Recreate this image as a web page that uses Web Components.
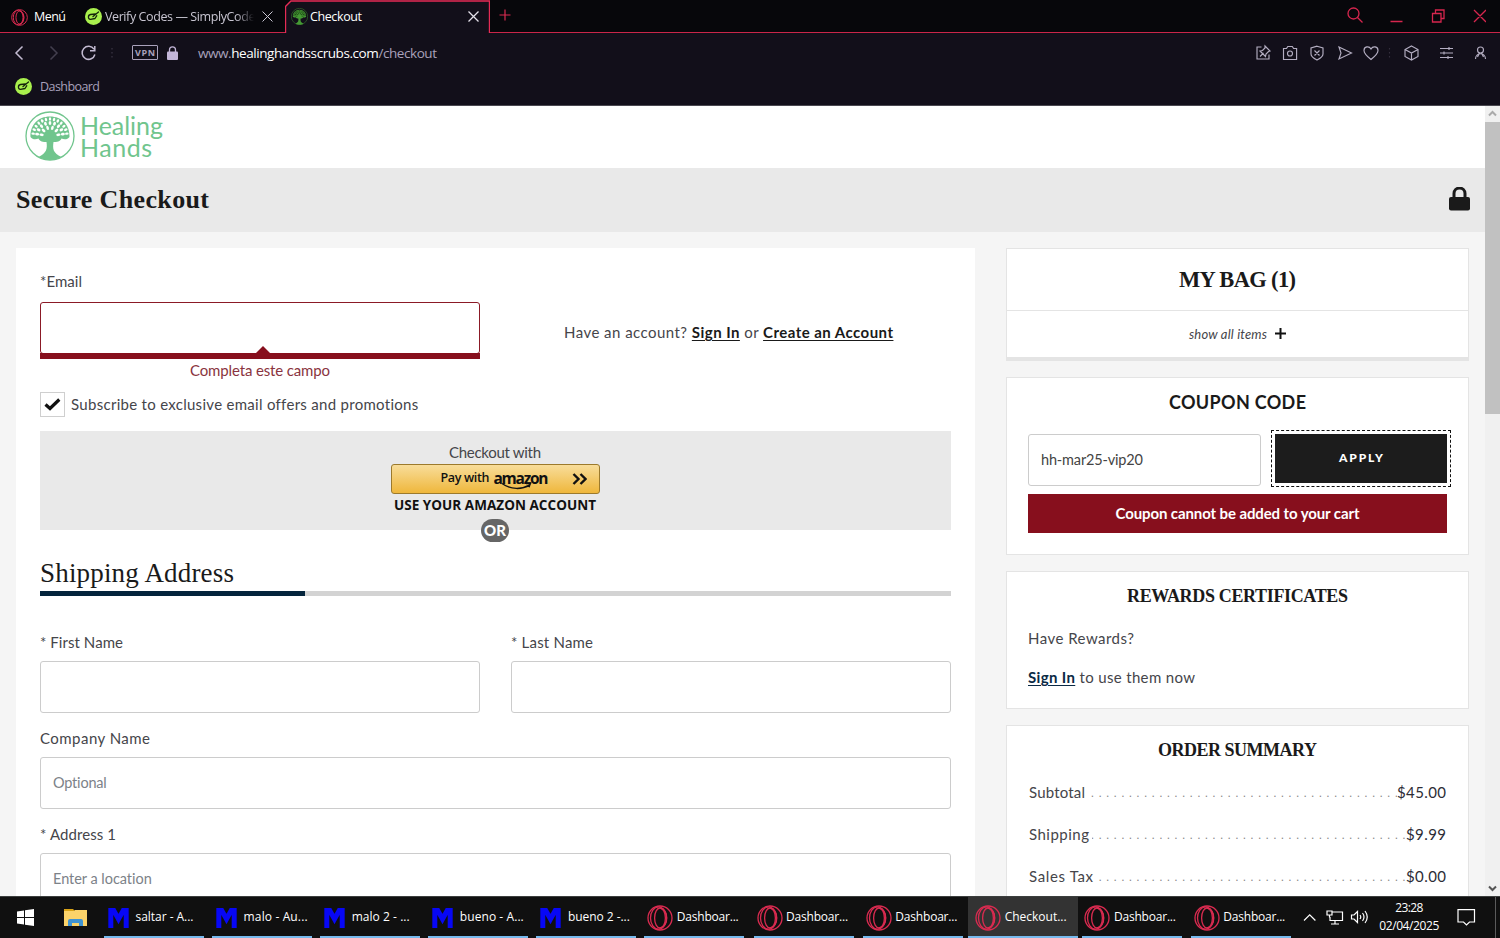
<!DOCTYPE html>
<html lang="es">
<head>
<meta charset="utf-8">
<title>Checkout</title>
<style>
  body {
    margin: 0;
    width: 1500px;
    height: 938px;
    overflow: hidden;
    display: flex;
    flex-direction: column;
    background: #f5f5f5;
    color: #45454a;
    font: 15px/20px Lato, "Open Sans", sans-serif;
  }
  .viewport { flex: 1; display: flex; min-height: 0; overflow: hidden; }
  .page { width: 1485px; overflow: hidden; }
  .columns { display: flex; justify-content: space-between; padding: 16px 16px 0; }
  .main { width: 911px; background: #fff; padding: 24px; height: 700px; }
  .side { width: 463px; display: flex; flex-direction: column; gap: 16px; }
  .account { display: flex; }
  .account form-field { width: 440px; }
  .signin { flex: 1; padding: 50px 0 0 84px; }
  .names { display: grid; grid-template-columns: 440px 440px; gap: 31px; }
  .fields { display: flex; flex-direction: column; gap: 16px; margin-top: 37px; }
  a { color: #1a1a1a; font-weight: bold; text-decoration: underline; text-underline-offset: 2px; }
  .rewards a { color: #0b2a45; }
  .subscribe { display: flex; align-items: center; gap: 6px; margin: 11px 0 14px; height: 25px; }
  .subscribe text-run { margin-top: -2px; }
  .box { width: 23px; height: 23px; border: 1px solid #cfcfcf; display: flex; align-items: center; justify-content: center; }
  .show { display: flex; justify-content: center; align-items: center; gap: 8px; height: 46px; font-size: 13px; font-style: italic; border-top: 1px solid #e4e4e4; }
  .show text-run { margin-top: -1px; }
  .show svg { margin-top: -2px; }
  .coupon { display: flex; justify-content: space-between; align-items: flex-start; margin: 17px 21px 0; }
  .coupon form-field { width: 233px; }
  .apply { box-sizing: border-box; width: 172px; height: 49px; padding-bottom: 2px; background: #1c1c1c; color: #fff; outline: 1px dashed #111; outline-offset: 3px; display: flex; align-items: center; justify-content: center; font-size: 12px; font-weight: 900; }
  .error { box-sizing: border-box; margin: 8px 21px 21px; height: 39px; padding-bottom: 2px; background: #870f1d; color: #fff; font-weight: bold; display: flex; align-items: center; justify-content: center; }
  .rewards { padding: 18px 21px 21px; }
  .rewards div + div { margin-top: 19px; }
</style>
</head>
<body>
<opera-tabs></opera-tabs>
<address-bar></address-bar>
<div class="viewport">
  <div class="page">
    <shop-header></shop-header>
    <title-bar><text-run w="193">Secure Checkout</text-run></title-bar>
    <div class="columns">
      <div class="main">
        <div class="account">
          <form-field invalid>
            <text-run slot="label" w="42">*Email</text-run>
            <text-run slot="message" w="140">Completa este campo</text-run>
          </form-field>
          <div class="signin"><text-run w="329">Have an account? <a>Sign In</a> or <a>Create an Account</a></text-run></div>
        </div>
        <div class="subscribe">
          <span class="box"><svg width="17" height="14" viewBox="0 0 17 14"><path d="M1.5 6.5 6 10.500 15.300 1.500" fill="none" stroke="#111" stroke-width="3.200"/></svg></span>
          <text-run w="347">Subscribe to exclusive email offers and promotions</text-run>
        </div>
        <amazon-box></amazon-box>
        <section-heading><text-run w="194">Shipping Address</text-run></section-heading>
        <div class="fields">
          <div class="names">
            <form-field><text-run slot="label" w="83">* First Name</text-run></form-field>
            <form-field><text-run slot="label" w="82">* Last Name</text-run></form-field>
          </div>
          <form-field><text-run slot="label" w="110">Company Name</text-run><text-run slot="value" w="54">Optional</text-run></form-field>
          <form-field><text-run slot="label" w="76">* Address 1</text-run><text-run slot="value" w="99">Enter a location</text-run></form-field>
        </div>
      </div>
      <div class="side">
        <side-card style="--title-size:22.5px;--title-height:61px;--foot:4px">
          <text-run slot="title" w="117">MY BAG (1)</text-run>
          <div class="show"><text-run w="78">show all items</text-run>
            <svg width="11" height="11" viewBox="0 0 11 11"><path d="M5.500 0v11M0 5.500h11" stroke="#111" stroke-width="2"/></svg></div>
        </side-card>
        <side-card style="--title-font:Lato,sans-serif;--title-size:18px;--title-height:39px;--title-pad:8px">
          <text-run slot="title" w="137">COUPON CODE</text-run>
          <div class="coupon">
            <form-field bare style="--value:#444"><text-run slot="value" w="102">hh-mar25-vip20</text-run></form-field>
            <div class="apply"><text-run w="44">APPLY</text-run></div>
          </div>
          <div class="error"><text-run w="244">Coupon cannot be added to your cart</text-run></div>
        </side-card>
        <side-card style="--title-size:18px;--title-height:38px;--title-pad:9px">
          <text-run slot="title" w="221">REWARDS CERTIFICATES</text-run>
          <div class="rewards">
            <div><text-run w="106">Have Rewards?</text-run></div>
            <div><text-run w="167"><a>Sign In</a> to use them now</text-run></div>
          </div>
        </side-card>
        <side-card style="--title-size:18px;--title-height:34px;--title-pad:13px">
          <text-run slot="title" w="159">ORDER SUMMARY</text-run>
          <summary-row><text-run w="56">Subtotal</text-run><text-run slot="price" w="49">$45.00</text-run></summary-row>
          <summary-row><text-run w="60">Shipping</text-run><text-run slot="price" w="40">$9.99</text-run></summary-row>
          <summary-row last><text-run w="64">Sales Tax</text-run><text-run slot="price" w="40">$0.00</text-run></summary-row>
        </side-card>
      </div>
    </div>
  </div>
  <page-scrollbar></page-scrollbar>
</div>
<win-taskbar></win-taskbar>

<script>
const UI_FONT = '"Open Sans", "Noto Sans", sans-serif';

const operaIcon = (size, sw = 1.2) => `<svg width="${size}" height="${size}" viewBox="0 0 26 26" fill="none" stroke="#d92b50" stroke-width="${sw}">
  <circle cx="13" cy="13" r="12"/><ellipse cx="13" cy="13" rx="5.4" ry="10"/><ellipse cx="11.5" cy="13" rx="8" ry="11.2"/><path d="M13 3c9 1 9 19 0 20"/></svg>`;

const codeIcon = (size) => `<svg width="${size}" height="${size}" viewBox="0 0 17 17"><circle cx="8.5" cy="8.5" r="8.5" fill="#a9f04d"/>
  <path d="M10.500 6 5.500 6.500c-3 .5-2.500 5 0 4.800l4.500-.8 1.800-2.800M8 8.500l5.500-4.500" fill="none" stroke="#16240c" stroke-width="1.300" stroke-linecap="round" stroke-linejoin="round"/></svg>`;

const leaves = () => {
  // three fans of leaf shapes cut out of the crown
  const rings = [[8.5, 6, 1.3, 2.2], [13, 9, 1.35, 2], [17, 13, 1.2, 1.8]];
  let out = "";
  for (const [r, n, rx, ry] of rings) {
    for (let i = 0; i < n; i++) {
      const a = -82 + (164 / (n - 1)) * i;
      out += `<ellipse cx="25" cy="${25 - r}" rx="${rx}" ry="${ry}" transform="rotate(${a} 25 25)"/>`;
    }
  }
  return out;
};

const treeIcon = (size, color, hole) => `<svg width="${size}" height="${size}" viewBox="0 0 50 50">
  <circle cx="25" cy="25" r="24" fill="none" stroke="${color}" stroke-width="1.3"/>
  <path d="M5.500 26C5 14 13 5.500 25 5.500S45 14 44.500 26c-2 3-6 2.500-8 1.500-1 3-5 3.500-8 3.500-1 7-.5 11 8 15-6 4-17 4-23 0 8-4 9-8 8-15-3 0-7-.5-8-3.500-2 1-6 1.500-8-1.500z" fill="${color}"/>
  <g fill="${hole}">${leaves()}</g></svg>`;

// Single line of text, tracked so that it fills the width given in "w".
class TextRun extends HTMLElement {
  constructor() {
    super();
    this.attachShadow({ mode: "open" }).innerHTML = `
      <style>:host { display: inline-block; white-space: nowrap; }</style><slot></slot>`;
  }
  connectedCallback() {
    const target = Number(this.getAttribute("w"));
    const count = this.textContent.length - 1;
    if (!target || count < 1) return;
    this.style.letterSpacing = "0px";
    const natural = this.getBoundingClientRect().width;
    const gap = (target - natural) / count;
    this.style.letterSpacing = gap.toFixed(3) + "px";
    this.style.marginRight = (-gap).toFixed(3) + "px";
  }
}

class OperaTabs extends HTMLElement {
  constructor() {
    super();
    this.attachShadow({ mode: "open" }).innerHTML = `
      <style>
        :host { display: flex; height: 33px; background: #07070b; color: #e8e6ee; font: 12.5px/18px ${UI_FONT}; }
        .cell { box-sizing: border-box; display: flex; align-items: center; height: 33px; border-bottom: 1px solid #c92549; }
        .menu { width: 84px; padding: 2px 0 0 11px; gap: 6px; color: #fff; }
        .tab { width: 201px; padding: 1px 12px 0 1px; gap: 3px; color: #c9c6d2; }
        .tab .name { width: 149px; margin-right: auto; overflow: hidden; -webkit-mask: linear-gradient(90deg, #000 88%, transparent); }
        .active { position: relative; width: 205px; background: #120f1a; border: 0; padding: 0 11px 0 6px; gap: 2px; color: #fff; }
        .active .name { flex: 1; padding-top: 1px; }
        .active .edge { position: absolute; inset: 0; }
        .rest { flex: 1; padding: 0 14px 2px 9px; }
        .tools { margin-left: auto; }
        svg { display: block; flex: none; }
      </style>
      <div class="cell menu">${operaIcon(17, 1.5)}<text-run w="32">Menú</text-run></div>
      <div class="cell tab">${codeIcon(17)}<span class="name"><text-run w="156">Verify Codes — SimplyCodes</text-run></span>
        <svg width="11" height="11" viewBox="0 0 11 11"><path d="m.5.5 10 10m0-10-10 10" stroke="#c9c6d2"/></svg></div>
      <div class="cell active">
        <svg class="edge" width="205" height="33" viewBox="0 0 205 33"><path d="M0 0h6L0 6z" fill="#07070b"/><path d="M0 32.500h.5V6.500l5.500-5.500h198.500v31.500h.5" fill="none" stroke="#e52b55" stroke-width="1.400"/></svg>
        ${treeIcon(17, "#459a34", "#173812")}<span class="name"><text-run w="52">Checkout</text-run></span>
        <svg width="11" height="11" viewBox="0 0 11 11"><path d="m.5.5 10 10m0-10-10 10" stroke="#e4e1ea" stroke-width="1.300"/></svg></div>
      <div class="cell rest">
        <svg width="12" height="12" viewBox="0 0 12 12"><path d="M6 .5v11M.5 6h11" stroke="#d92b50" stroke-width="1.200"/></svg>
        <svg class="tools" width="140" height="20" viewBox="0 -1 140 20" fill="none" stroke="#d6264e" stroke-width="1.300"><circle cx="7.500" cy="7.500" r="5.500"/><path d="m11.500 11.500 5 5M44.500 15.500h12M86.500 7.500H95V16h-8.500zM89.500 7.500V4H98v8.500h-3M128 4l12 12m0-12-12 12"/></svg>
      </div>`;
  }
}

class AddressBar extends HTMLElement {
  constructor() {
    super();
    this.attachShadow({ mode: "open" }).innerHTML = `
      <style>
        :host { display: block; box-sizing: border-box; height: 73px; background: #120f1a; border-bottom: 1px solid #4a4850; color: #a9a1bb; font: 13.5px/20px ${UI_FONT}; }
        .row { display: flex; align-items: center; height: 39px; justify-content: space-between; }
        .left { display: flex; align-items: center; }
        .vpn { width: 24px; height: 13px; border: 1px solid #a9a1bb; border-radius: 1px; font: bold 9px/13px ${UI_FONT}; text-align: center; margin: 0 9px 0 17px; }
        .url { margin-left: 20px; }
        b { font-weight: normal; color: #fff; }
        .marks { display: flex; align-items: center; gap: 8px; height: 29px; padding-left: 15px; font-size: 12.5px; }
      </style>
      <div class="row">
        <div class="left">
          <svg width="115" height="20" viewBox="0 0 115 20" fill="none" stroke="#c3bbd2" stroke-width="1.500">
            <path d="m22.500 3.500-6.500 6.500 6.500 6.500"/><path d="m50.500 3.500 6.500 6.500-6.500 6.500" stroke="#433f4e"/>
            <path d="M94 6.200a6.500 6.500 0 1 0 .9 5.300M94.800 3v4.800H90"/><path d="M112 5v12" stroke="#332f3d" stroke-dasharray="1.500 2.500"/></svg>
          <div class="vpn"><text-run w="20">VPN</text-run></div>
          <svg width="11" height="14" viewBox="0 0 11 14"><path d="M2.500 6V3.800a3 3 0 0 1 6 0V6" fill="none" stroke="#c3b6d8" stroke-width="1.300"/><rect y="5.500" width="11" height="8.500" rx="1" fill="#c3b6d8"/></svg>
          <span class="url"><text-run w="239">www.<b>healinghandsscrubs.com</b>/checkout</text-run></span>
        </div>
        <svg width="245" height="20" viewBox="1255 0 245 20" fill="none" stroke="#b4aec2" stroke-width="1.150">
          <path d="M1261.500 4h-4.500v12h12v-4.500M1265 3l5 5-1.500.5-2.500 2.500-.5 2.500-5.500-5.500 2.500-.5L1265 5zM1263.500 10l-3.500 3.500"/>
          <path d="M1283.500 5.500h3l1.300-2h4.500l1.300 2h3v11h-13.100z"/><circle cx="1290" cy="10.500" r="2.500"/>
          <path d="M1317 3.200l6 1.800v6c0 3-3 4.500-6 6-3-1.500-6-3-6-6V5zM1314.500 7.500l5 5m0-5-5 5"/>
          <path d="m1339 4 12.500 6-12.500 6 2-6z"/>
          <path d="M1371 16.500c-5-4-7-6.500-7-9 0-4 5-5 7-1.500 2-3.500 7-2.500 7 1.500 0 2.500-2 5-7 9z"/>
          <path d="M1389.500 5v12" stroke="#332f3d" stroke-dasharray="1.500 2.500"/>
          <path d="m1411.500 3 6.500 3.500v7l-6.500 3.500-6.500-3.500v-7zM1405 6.500l6.500 3.500 6.500-3.500M1411.500 10v7"/>
          <path d="M1440 5.500h13M1440 10h13M1440 14.500h13M1449 4v3M1444 8.500v3M1448 13v3"/>
          <circle cx="1480.500" cy="7" r="3"/><path d="M1475.500 16c0-7 10-7 10 0M1477.500 14l2-4M1483.500 14l-2-4"/></svg>
      </div>
      <div class="marks">${codeIcon(17)}<text-run w="60">Dashboard</text-run></div>`;
  }
}

class ShopHeader extends HTMLElement {
  constructor() {
    super();
    this.attachShadow({ mode: "open" }).innerHTML = `
      <style>
        :host { display: flex; height: 62px; box-sizing: border-box; background: #fff; padding: 5px 0 0 25px; gap: 4px; color: #70c58d; font: 25px/22px Lato, sans-serif; }
        .words { display: flex; flex-direction: column; align-items: flex-start; padding: 3px 0 0 1px; }
      </style>
      ${treeIcon(50, "#70c58d", "#fff")}
      <div class="words"><text-run w="83">Healing</text-run><text-run w="72">Hands</text-run></div>`;
  }
}

class TitleBar extends HTMLElement {
  constructor() {
    super();
    this.attachShadow({ mode: "open" }).innerHTML = `
      <style>
        :host { display: flex; align-items: center; justify-content: space-between; height: 64px; box-sizing: border-box; padding: 0 15px 1px 16px; background: #e9e9e9; color: #1a1a1a; font: bold 26px/32px "Liberation Serif", serif; }
        svg { margin-bottom: 2px; }
      </style>
      <slot></slot>
      <svg width="21" height="24" viewBox="0 0 21 24"><path d="M5 11V6.500a5.500 5.500 0 0 1 11 0V11" fill="none" stroke="#1a1a1a" stroke-width="3"/><rect y="10" width="21" height="13.500" rx="2" fill="#1a1a1a"/></svg>`;
  }
}

class FormField extends HTMLElement {
  constructor() {
    super();
    this.attachShadow({ mode: "open" }).innerHTML = `
      <style>
        :host { display: block; }
        .label { height: 20px; line-height: 19px; margin-bottom: 8px; }
        .input { box-sizing: border-box; height: 52px; border: 1px solid #ccc; border-radius: 3px; background: #fff; display: flex; align-items: center; padding-left: 12px; color: var(--value, #7c8288); font-size: 14.5px; }
        .message { display: none; }
        :host([bare]) .label { display: none; }
        :host([invalid]) .label { margin-bottom: 10px; line-height: 18px; }
        :host([invalid]) .input { border-color: #8b1a26; }
        :host([invalid]) .message { display: block; position: relative; margin-top: -1px; border-top: 6px solid #870f1d; padding-top: 1px; text-align: center; color: #8a3440; line-height: 21px; }
        /* pointer of the message bar, over the input's lower edge */
        :host([invalid]) .message::before { content: ""; position: absolute; left: 216px; top: -13px; border: 7px solid transparent; border-top: 0; border-bottom-color: #870f1d; }
      </style>
      <div class="label"><slot name="label"></slot></div>
      <div class="input"><slot name="value"></slot></div>
      <div class="message"><slot name="message"></slot></div>`;
  }
}

class AmazonBox extends HTMLElement {
  constructor() {
    super();
    this.attachShadow({ mode: "open" }).innerHTML = `
      <style>
        :host { position: relative; display: flex; flex-direction: column; align-items: center; box-sizing: border-box; height: 99px; padding: 11px 1px 0 0; background: #e9e9e9; }
        .pay { box-sizing: border-box; width: 209px; height: 30px; margin-top: 2px; border: 1px solid #9c7a2c; border-radius: 3px; background: linear-gradient(#f8dd9a, #efb73c); display: flex; align-items: center; padding: 0 12px 3px 49px; color: #111; font: 600 12.5px/20px ${UI_FONT}; }
        .brand { position: relative; margin-left: 4px; font-size: 15.5px; font-weight: bold; line-height: 20px; }
        .brand svg { position: absolute; left: 7px; top: 14px; }
        .chev { margin: 3px 0 0 auto; }
        .use { font: bold 13.5px/20px ${UI_FONT}; color: #111; margin-top: 1px; }
        .or { position: absolute; top: 88px; left: 441px; width: 28px; height: 23px; border-radius: 12px; background: #666; color: #fff; font: 900 15px/23px Lato, sans-serif; text-align: center; }
      </style>
      <text-run w="92">Checkout with</text-run>
      <div class="pay"><text-run w="49">Pay with</text-run>
        <span class="brand"><text-run w="55">amazon</text-run><svg width="32" height="10" viewBox="0 0 32 10" fill="none" stroke="#111" stroke-width="1.500"><path d="M1 1.500c9 6.500 20 6 28 1.500M25 1.500l4.500-.3-1.500 4"/></svg></span>
        <svg class="chev" width="15" height="12" viewBox="0 0 15 12" fill="none" stroke="#111" stroke-width="2.400"><path d="m1.500 1 5 5-5 5M8.500 1l5 5-5 5"/></svg></div>
      <div class="use"><text-run w="202">USE YOUR AMAZON ACCOUNT</text-run></div>
      <div class="or"><text-run w="22">OR</text-run></div>`;
  }
}

class SectionHeading extends HTMLElement {
  constructor() {
    super();
    this.attachShadow({ mode: "open" }).innerHTML = `
      <style>
        :host { display: block; margin-top: 27px; color: #1a1a1a; font: 27px/32px "Liberation Serif", serif; }
        .bar { height: 5px; margin-top: 2px; background: linear-gradient(90deg, #04243c 265px, #d3d3d3 265px); }
      </style>
      <slot></slot><div class="bar"></div>`;
  }
}

class SideCard extends HTMLElement {
  constructor() {
    super();
    this.attachShadow({ mode: "open" }).innerHTML = `
      <style>
        :host { display: block; box-sizing: border-box; background: #fff; border: 1px solid #e4e4e4; border-bottom-width: var(--foot, 1px); }
        .title { box-sizing: border-box; height: var(--title-height); padding-top: var(--title-pad, 0px); display: flex; align-items: center; justify-content: center; color: #1a1a1a; font: bold var(--title-size)/28px var(--title-font, "Liberation Serif", serif); }
      </style>
      <div class="title"><slot name="title"></slot></div>
      <slot></slot>`;
  }
}

class SummaryRow extends HTMLElement {
  constructor() {
    super();
    this.attachShadow({ mode: "open" }).innerHTML = `
      <style>
        :host { display: flex; justify-content: space-between; position: relative; overflow: hidden; margin: 22px 22px 0; height: 20px; }
        :host([last]) { margin-bottom: 40px; }
        :host::before { content: "${". ".repeat(56)}"; position: absolute; left: 1px; top: 1px; white-space: nowrap; color: #888; font: 12px/20px "Liberation Sans"; letter-spacing: .465px; }
        span { position: relative; background: #fff; padding-right: 3px; }
        span + span { padding: 0; color: #2c2c35; }
      </style>
      <span><slot></slot></span><span><slot name="price"></slot></span>`;
  }
}

class PageScrollbar extends HTMLElement {
  constructor() {
    super();
    this.attachShadow({ mode: "open" }).innerHTML = `
      <style>
        :host { width: 15px; background: #f0f0f0; display: flex; flex-direction: column; align-items: center; }
        .thumb { width: 15px; height: 292px; background: #c1c1c1; margin-bottom: auto; }
        svg { flex: none; }
      </style>
      <svg width="15" height="16" viewBox="0 0 15 16"><path d="m4 9.500 3.500-3.500L11 9.500" fill="none" stroke="#aaa" stroke-width="2"/></svg>
      <div class="thumb"></div>
      <svg width="15" height="16" viewBox="0 0 15 16"><path d="m4 6.500 3.500 3.500L11 6.500" fill="none" stroke="#555" stroke-width="2"/></svg>`;
  }
}

class TaskButton extends HTMLElement {
  constructor() {
    super();
    const opera = this.hasAttribute("opera");
    const icon = opera ? operaIcon(26, 1.3)
      : `<svg width="21" height="20" viewBox="0 0 21 20"><path d="M2.800 20V2h2.700l5 9 5-9h2.700v18" fill="none" stroke="#0707f5" stroke-width="5"/></svg>`;
    this.attachShadow({ mode: "open" }).innerHTML = `
      <style>
        :host { position: relative; box-sizing: border-box; flex: none; width: ${opera ? 109.3 : 108.1}px; display: flex; align-items: center; padding-left: ${opera ? 6.8 : 7.5}px; gap: ${opera ? 3.5 : 7}px; }
        :host::after { content: ""; position: absolute; left: 4px; right: ${opera ? 5.3 : 4.1}px; bottom: 0; height: 2px; background: #76b9ed; }
        :host([active]) { background: #333; }
        :host([active])::after { left: 0; right: 0; }
        svg { flex: none; }
        slot { display: block; margin-top: -1px; }
      </style>
      ${icon}<slot></slot>`;
  }
}

class WinTaskbar extends HTMLElement {
  constructor() {
    super();
    const apps = [["saltar - A...", 58], ["malo - Au...", 64], ["malo 2 - ...", 58], ["bueno - A...", 64], ["bueno 2 -...", 62],
      ["Dashboar...", 62, "opera"], ["Dashboar...", 62, "opera"], ["Dashboar...", 62, "opera"], ["Checkout...", 62, "opera active"],
      ["Dashboar...", 62, "opera"], ["Dashboar...", 62, "opera"]];
    this.attachShadow({ mode: "open" }).innerHTML = `
      <style>
        :host { display: flex; box-sizing: border-box; height: 42px; background: #101010; border-top: 1px solid #3c3f3e; color: #fff; font: 12px/18px ${UI_FONT}; }
        .pins { width: 100px; flex: none; display: flex; align-items: center; box-sizing: border-box; padding-left: 17px; gap: 30px; }
        .tray { flex: 1; display: flex; align-items: center; }
        .clock { width: 64px; margin: -2px 0 0 7px; display: flex; flex-direction: column; align-items: center; }
        .note { margin-left: 16px; }
        .end { margin-left: auto; align-self: stretch; width: 4px; border-left: 1px solid #5b5b5b; }
      </style>
      <div class="pins">
        <svg width="17" height="17" viewBox="0 0 17 17" fill="#fff"><path d="M0 2.400 7 1.400V8H0zM8 1.250 17 0v8H8zM0 9h7v6.600l-7-1zM8 9h9v8l-9-1.250z"/></svg>
        <svg width="23" height="19" viewBox="0 0 23 19"><path d="M0 1h9l2 2H0z" fill="#d9a317"/><path d="M0 3h10l1-1h12v16H0z" fill="#fbd36a"/><path d="M4 18v-5q0-2 2-2h11q2 0 2 2v5h-4v-3H8v3z" fill="#3f93d2"/></svg>
      </div>
      ${apps.map(([name, w, flags = ""]) => `<task-button ${flags}><text-run w="${w}">${name}</text-run></task-button>`).join("")}
      <div class="tray">
        <svg width="74" height="20" viewBox="1296 1 74 20" fill="none" stroke="#fff" stroke-width="1.200">
          <path d="m1304 13.500 5.700-5.700 5.700 5.700"/>
          <path d="M1332 5h10.500v8.500H1330V10M1335 13.500v3.500M1331 17h8"/><path d="M1327 4h5v4h-5zM1329.500 8v2.500"/>
          <path d="M1351.500 8h2.500l3.500-3.500v11L1354 12h-2.500zM1360 8q1.500 2 0 4M1362.500 6q3 4 0 8M1365 4q4.500 6 0 12"/></svg>
        <div class="clock"><text-run w="28">23:28</text-run><text-run w="60">02/04/2025</text-run></div>
        <svg class="note" width="19" height="18" viewBox="0 1 19 18"><path d="M1 1.600h16.500V14h-5l-3 3-3-3H1z" fill="none" stroke="#fff" stroke-width="1.200"/></svg>
        <div class="end"></div>
      </div>`;
  }
}

customElements.define("opera-tabs", OperaTabs);
customElements.define("address-bar", AddressBar);
customElements.define("shop-header", ShopHeader);
customElements.define("title-bar", TitleBar);
customElements.define("form-field", FormField);
customElements.define("amazon-box", AmazonBox);
customElements.define("section-heading", SectionHeading);
customElements.define("side-card", SideCard);
customElements.define("summary-row", SummaryRow);
customElements.define("page-scrollbar", PageScrollbar);
customElements.define("win-taskbar", WinTaskbar);
customElements.define("task-button", TaskButton);
// last, so that every font is already in place when the runs are measured
customElements.define("text-run", TextRun);
</script>
</body>
</html>
